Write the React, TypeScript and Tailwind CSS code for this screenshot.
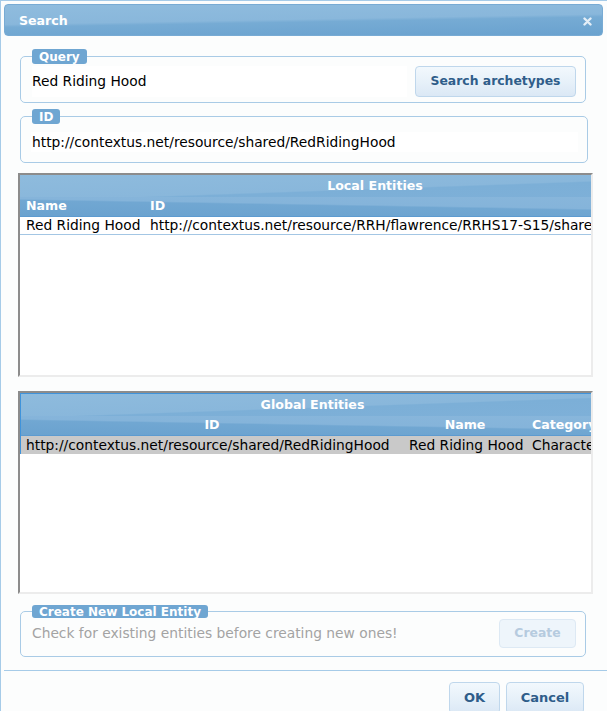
import React from "react";

const legendCls =
  "flex h-[15px] items-center rounded-[3px] bg-[#6fa6d2] px-[7px] text-[12px] font-bold text-white";

const fieldsetCls =
  "ml-[19px] w-[566px] rounded-[5px] border border-solid border-[#a9cbe6] pl-[11px] pr-[9px]";

const btnCls =
  "flex items-center justify-center rounded-[4px] border border-solid border-[#bfd7ec] bg-[linear-gradient(180deg,#f2f8fd_0%,#e6f0f9_55%,#dbe8f5_100%)] font-bold text-[#2f5d8a]";

const bandCls =
  "flex h-[22px] items-center justify-center bg-[linear-gradient(178deg,#8ebbdd_0%,#89b7db_55%,#7cafd7_58%,#7eb0d8_100%)] text-[12.6px] font-bold text-white";

const colHeadCls =
  "flex h-[20px] items-center border-b border-solid border-[#5d9bd0] bg-[linear-gradient(181deg,#88b6db_0%,#85b4da_45%,#71a7d2_50%,#6aa2cf_100%)] text-[12.6px] font-bold text-white";

function Grid({
  title,
  children,
  focused,
  wide,
}: {
  title: string;
  children: React.ReactNode;
  focused?: boolean;
  wide?: boolean;
}) {
  const inner = [
    wide ? "w-[710px]" : "w-[584px]",
    focused ? "border-t border-l border-solid border-[#3f93db]" : "",
  ].join(" ");
  return (
    <div className="ml-[17px] h-full w-[575px] overflow-hidden border-2 border-solid border-t-[#8c8c8c] border-l-[#8c8c8c] border-r-[#ececec] border-b-[#ececec] bg-white">
      <div className={inner}>
        <div className={bandCls}>{title}</div>
        {children}
      </div>
    </div>
  );
}

export default function App() {
  return (
    <div className="h-[711px] w-[607px] overflow-hidden border-t border-l border-solid border-[#a6cbe8] bg-[#fcfdfd] font-['DejaVu_Sans',sans-serif] text-[13.8px] text-black">
      {/* title bar */}
      <div className="mt-[3px] ml-[3px] mr-[4px] flex h-[32px] items-center justify-between rounded-[4px] border border-solid border-[#78abd4] bg-[linear-gradient(179deg,#8fbcde_0%,#89b7db_48%,#76abd4_55%,#6aa2cf_100%)] pl-[14px] pr-[10px]">
        <span className="mt-[2px] text-[12.6px] font-bold text-white">Search</span>
        <svg width="9" height="9" viewBox="0 0 9 9" className="mt-[2px]">
          <path
            d="M1.5 1.5 L7.5 7.5 M7.5 1.5 L1.5 7.5"
            stroke="#e4eef7"
            strokeWidth="2.4"
            strokeLinecap="round"
          />
        </svg>
      </div>

      {/* query */}
      <fieldset className={`${fieldsetCls} mt-[13px] pb-[5px]`}>
        <legend className={legendCls}>Query</legend>
        <div className="mt-[2px] flex h-[31px] items-center justify-between">
          <div className="flex h-[31px] w-[375px] items-center bg-white">
            Red Riding Hood
          </div>
          <button className={`${btnCls} h-[31px] w-[161px] text-[12.4px]`}>
            Search archetypes
          </button>
        </div>
      </fieldset>

      {/* id */}
      <fieldset className={`${fieldsetCls} mt-[6px] pb-[10px]`}>
        <legend className={legendCls}>ID</legend>
        <div className="mt-[8px] -ml-[1px] flex h-[20px] w-[547px] items-center bg-white pl-[1px]">
          http://contextus.net/resource/shared/RedRidingHood
        </div>
      </fieldset>

      {/* local entities */}
      <div className="mt-[10px] h-[204px]">
        <Grid title="Local Entities" wide>
          <div className={colHeadCls}>
            <div className="w-[124px] pl-[6px]">Name</div>
            <div className="pl-[6px]">ID</div>
          </div>
          <div className="flex h-[18px] items-center whitespace-nowrap border-b border-solid border-[#a3c6e4]">
            <div className="w-[124px] pl-[6px]">Red Riding Hood</div>
            <div className="pl-[6px]">
              http://contextus.net/resource/RRH/flawrence/RRHS17-S15/shared
            </div>
          </div>
        </Grid>
      </div>

      {/* global entities */}
      <div className="mt-[14px] h-[203px]">
        <Grid title="Global Entities" focused>
          <div className={colHeadCls}>
            <div className="w-[382px] text-center">ID</div>
            <div className="w-[124px] text-center">Name</div>
            <div className="pl-[5px] whitespace-nowrap">Category</div>
          </div>
          <div className="flex h-[18px] items-center whitespace-nowrap bg-[#c9c9c9]">
            <div className="w-[382px] pl-[5px]">
              http://contextus.net/resource/shared/RedRidingHood
            </div>
            <div className="w-[124px] pl-[6px]">Red Riding Hood</div>
            <div className="pl-[5px]">Character</div>
          </div>
        </Grid>
      </div>

      {/* create */}
      <fieldset className={`${fieldsetCls} mt-[11px] pb-[8px]`}>
        <legend className={`${legendCls} !h-[13px]`}>
          Create New Local Entity
        </legend>
        <div className="mt-[1px] flex h-[29px] items-center justify-between">
          <span className="text-[#a3a3a3]">
            Check for existing entities before creating new ones!
          </span>
          <button className="flex h-[29px] w-[77px] items-center justify-center rounded-[4px] border border-solid border-[#dde9f4] bg-[#eef5fb] text-[12.4px] font-bold text-[#b6cbdf]">
            Create
          </button>
        </div>
      </fieldset>

      {/* footer */}
      <div className="mt-[13px] ml-[3px] h-px bg-[#a6cbe8]" />
      <div className="mt-[11px] flex justify-end gap-[6px] pr-[23px]">
        <button className={`${btnCls} h-[32px] w-[51px] text-[13px]`}>OK</button>
        <button className={`${btnCls} h-[32px] w-[78px] text-[13px]`}>
          Cancel
        </button>
      </div>
    </div>
  );
}
